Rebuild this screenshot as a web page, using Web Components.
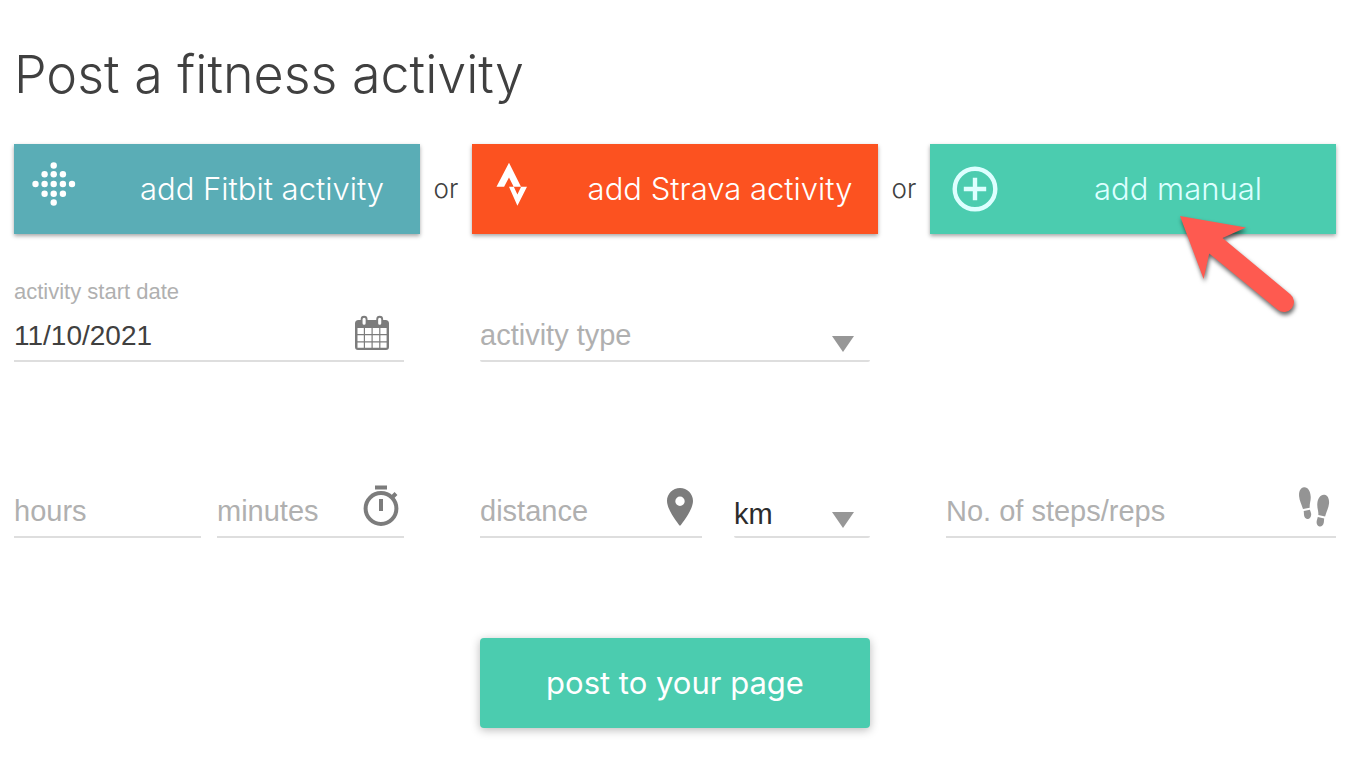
<!DOCTYPE html>
<html lang="en">
<head>
<meta charset="utf-8">
<meta name="viewport" content="width=device-width, initial-scale=1">
<title>Post a fitness activity</title>
<style>
  body {
    margin: 0;
    background: #fff;
    color: #404040;
    font-family: "Liberation Sans", Arial, sans-serif;
    --display-font: Inter, "Open Sans", sans-serif;
    --green: #4bccaf;
  }
</style>
</head>
<body>
<activity-form></activity-form>

<script>
const define = (name, html, setup) => {
  const template = document.createElement("template");
  template.innerHTML = html;

  customElements.define(name, class extends HTMLElement {
    constructor() {
      super();
      this.attachShadow({ mode: "open" });
      this.shadowRoot.appendChild(template.content.cloneNode(true));
    }

    connectedCallback() {
      if (setup) setup(this, this.shadowRoot);
    }
  });
};

define("service-button", /* HTML */ `
  <style>
    :host {
      display: block;
      position: relative;
    }

    button {
      display: flex;
      align-items: center;
      width: 100%;
      height: 90px;
      margin: 0;
      padding: 0;
      border: 0;
      background: var(--button-color, var(--green));
      color: var(--button-text, #fff);
      font: 300 31px/36px var(--display-font);
      box-shadow: 0 2px 4px rgba(0, 0, 0, 0.35);
      cursor: pointer;
    }

    .icon {
      flex: 0 0 90px;
      height: 90px;
    }

    .label {
      flex: 1;
      text-align: center;
      white-space: nowrap;
    }
  </style>
  <button type="button">
    <span class="icon"><slot name="icon"></slot></span>
    <span class="label"><slot></slot></span>
  </button>
  <slot name="pointer"></slot>
`);

define("submit-button", /* HTML */ `
  <style>
    :host {
      display: block;
    }

    button {
      width: 100%;
      height: 90px;
      border: 0;
      border-radius: 4px;
      background: var(--green);
      color: #fff;
      font: 400 31px/36px var(--display-font);
      box-shadow: 0 2px 10px rgba(0, 0, 0, 0.28);
      cursor: pointer;
    }
  </style>
  <button type="submit"><slot></slot></button>
`);

define("text-field", /* HTML */ `
  <style>
    :host {
      display: block;
      min-width: 0;
    }

    label {
      display: block;
      height: 30px;
      font-size: 22px;
      line-height: 28px;
      color: #b0b0b0;
    }

    label:empty {
      display: none;
    }

    .box {
      display: flex;
      height: 52px;
      border-bottom: 2px solid #dedede;
    }

    input {
      flex: 1;
      min-width: 0;
      padding: 2px 0 0;
      border: 0;
      outline: 0;
      background: none;
      color: inherit;
      font: 29px/36px "Liberation Sans", Arial, sans-serif;
    }

    input.filled {
      padding-top: 4px;
      font-size: 28px;
    }

    input::placeholder {
      color: #b0b0b0;
      opacity: 1;
    }
  </style>
  <label for="field"></label>
  <div class="box">
    <input id="field" type="text">
    <slot name="icon"></slot>
  </div>
`, (host, root) => {
  const input = root.querySelector("input");
  const label = host.getAttribute("label");
  const value = host.getAttribute("value");
  const placeholder = host.getAttribute("placeholder");
  if (label) root.querySelector("label").textContent = label;
  if (placeholder) {
    input.placeholder = placeholder;
    input.setAttribute("aria-label", placeholder);
  }
  if (value) {
    input.value = value;
    input.classList.add("filled");
  }
});

define("select-field", /* HTML */ `
  <style>
    :host {
      display: block;
      min-width: 0;
    }

    .box {
      display: grid;
      grid-template-columns: 1fr 38px;
      height: 52px;
      border-bottom: 2px solid #dedede;
      border-radius: 2px;
    }

    select {
      grid-area: 1 / 1 / 2 / 3;
      appearance: none;
      min-width: 0;
      padding: 2px 0 0;
      border: 0;
      outline: 0;
      background: none;
      color: #b0b0b0;
      font: 29px/36px "Liberation Sans", Arial, sans-serif;
    }

    select.filled {
      padding-top: 8px;
      color: #2c2c2c;
    }

    svg {
      grid-area: 1 / 2;
      width: 38px;
      height: 52px;
      pointer-events: none;
    }
  </style>
  <div class="box">
    <select></select>
    <svg viewBox="0 0 38 52" aria-hidden="true"><path d="M0 28h22l-11 16z" fill="#979797"/></svg>
  </div>
`, (host, root) => {
  const select = root.querySelector("select");
  select.setAttribute("aria-label", host.getAttribute("label"));
  host.getAttribute("options").split(",").forEach((name) => select.add(new Option(name)));
  select.classList.toggle("filled", host.hasAttribute("filled"));
});

// Red arrow laid over the button that opens the manual form
define("pointer-arrow", /* HTML */ `
  <style>
    :host {
      position: absolute;
      top: 62px;
      left: calc(50% + 37px);
      pointer-events: none;
    }

    svg {
      display: block;
      filter: drop-shadow(1px 3px 2px rgba(0, 0, 0, 0.6));
    }
  </style>
  <svg width="140" height="120" viewBox="0 0 140 120" aria-hidden="true">
    <path d="M10 10 76 21.5 52.5 32 120.3 88.2A10 10 0 0 1 107.7 103.8L39.2 47.5 33.6 73z" fill="#fe5a50"/>
  </svg>
`);

define("activity-form", /* HTML */ `
  <style>
    :host {
      display: block;
      padding: 42px 12px 34px 14px;
    }

    h1 {
      margin: 0 0 36px;
      font: 300 52px/66px var(--display-font);
    }

    .services {
      display: grid;
      grid-template-columns: 1fr 52px 1fr 52px 1fr;
      align-items: center;
      margin-bottom: 44px;
    }

    .or {
      text-align: center;
      font: 300 26px/36px var(--display-font);
    }

    .fields {
      display: grid;
      grid-template-columns: repeat(3, 1fr);
      column-gap: 76px;
      row-gap: 122px;
      align-items: end;
    }

    .duration {
      display: grid;
      grid-template-columns: 1fr 1fr;
      gap: 16px;
    }

    .distance {
      display: grid;
      grid-template-columns: 1fr 136px;
      gap: 32px;
    }

    .empty {
      grid-column: 3;
    }

    .actions {
      display: grid;
      grid-template-columns: repeat(3, 1fr);
      column-gap: 76px;
      margin-top: 100px;
    }

    .actions submit-button {
      grid-column: 2;
    }

    svg {
      display: block;
    }
  </style>

  <h1>Post a fitness activity</h1>

  <form>
    <div class="services">
      <service-button style="--button-color: #5aadb6">
        <svg slot="icon" width="90" height="90" viewBox="0 0 90 90" fill="#fff" aria-hidden="true">
          <circle cx="39.7" cy="21.5" r="3.2"/>
          <circle cx="30.6" cy="30.3" r="3.2"/><circle cx="39.7" cy="30.3" r="3.2"/><circle cx="48.9" cy="30.3" r="3.2"/>
          <circle cx="21.5" cy="40" r="3.2"/><circle cx="30.6" cy="40" r="3.2"/><circle cx="39.7" cy="40" r="3.2"/><circle cx="48.9" cy="40" r="3.2"/><circle cx="58" cy="40" r="3.2"/>
          <circle cx="30.6" cy="49.7" r="3.2"/><circle cx="39.7" cy="49.7" r="3.2"/><circle cx="48.9" cy="49.7" r="3.2"/>
          <circle cx="39.7" cy="58.5" r="3.2"/>
        </svg>
        add Fitbit activity
      </service-button>
      <span class="or">or</span>
      <service-button style="--button-color: #fc5220">
        <svg slot="icon" width="90" height="90" viewBox="0 0 90 90" fill="#fff" aria-hidden="true">
          <path d="M37 18.7 24.5 42.8h7.600l4.900-9.400 4.700 9.400H49zM37 42.800h4.800l3.600 7.600 3.700-7.600H55L45.400 61.700z"/>
        </svg>
        add Strava activity
      </service-button>
      <span class="or">or</span>
      <service-button style="--button-text: #dff">
        <svg slot="icon" width="90" height="90" viewBox="0 0 90 90" fill="none" stroke="#dff" stroke-width="4.4" aria-hidden="true">
          <circle cx="45" cy="45" r="20.3"/>
          <path d="M45 33.8v22.4M33.8 45h22.4"/>
        </svg>
        add manual
        <pointer-arrow slot="pointer"></pointer-arrow>
      </service-button>
    </div>

    <div class="fields">
      <text-field label="activity start date" value="11/10/2021">
        <svg slot="icon" width="50" height="52" viewBox="0 0 50 52" aria-hidden="true">
          <path d="M4.5 12h27a3.5 3.5 0 0 1 3.5 3.5V39a3 3 0 0 1-3 3H4a3 3 0 0 1-3-3V15.5a3.5 3.5 0 0 1 3.5-3.5z" fill="#7c7c7c"/>
          <path d="M3.500 20h6.300v6H3.500zm7.500 0h6.500v6H11zm7.700 0h6.500v6h-6.500zm7.700 0h6.200v6h-6.200zM3.500 27.200h6.300v6H3.500zm7.500 0h6.500v6H11zm7.700 0h6.500v6h-6.500zm7.700 0h6.200v6h-6.200zM3.500 34.400h6.300v5.400H3.500zm7.500 0h6.500v5.400H11zm7.700 0h6.500v5.400h-6.500zm7.700 0h6.200v5.400h-6.200z" fill="#fff"/>
          <rect x="7.6" y="8.8" width="5" height="9" rx="2.5" fill="#fff" stroke="#7c7c7c" stroke-width="1.9"/>
          <rect x="23.2" y="8.800" width="5" height="9" rx="2.5" fill="#fff" stroke="#7c7c7c" stroke-width="1.9"/>
        </svg>
      </text-field>
      <select-field label="activity type" options="activity type"></select-field>
      <div class="empty"></div>

      <div class="duration">
        <text-field placeholder="hours"></text-field>
        <text-field placeholder="minutes">
          <svg slot="icon" width="50" height="52" viewBox="0 0 50 52" fill="none" stroke="#7c7c7c" stroke-width="4" aria-hidden="true">
            <circle cx="27" cy="24.5" r="15.4"/>
            <path d="M21 3.500h12M27 15v12M38 13.500l4-4"/>
          </svg>
        </text-field>
      </div>
      <div class="distance">
        <text-field placeholder="distance">
          <svg slot="icon" width="50" height="52" viewBox="0 0 50 52" aria-hidden="true">
            <path d="M28 4c-7.200 0-13 5.800-13 13 0 9.500 13 25 13 25s13-15.500 13-25c0-7.200-5.800-13-13-13zm0 18a4.700 4.700 0 1 1 0-9.400 4.700 4.700 0 0 1 0 9.400z" fill="#7c7c7c"/>
          </svg>
        </text-field>
        <select-field label="distance unit" options="km,miles" filled></select-field>
      </div>
      <text-field placeholder="No. of steps/reps">
        <svg slot="icon" width="50" height="52" viewBox="0 0 50 52" fill="#949494" aria-hidden="true">
          <path d="M18 3.200c-3.500.3-5.300 4.200-4.900 9 .3 4.500 2.500 8.200 3.900 12.900l6.700-1.400c-.3-4.300 1.300-6.700 1-11.300C24.300 7 22 2.900 18 3.200zM17.700 27.100l6.200-1.400c.6 1.800 1.400 3.300 1.300 5-.1 2.300-1.300 3.900-3 4.300-2 .4-3.700-1.300-4.100-3.500-.3-1.500-.1-2.700-.4-4.400z"/>
          <path d="M38.500 10.700c3.300.4 5 4.300 4.500 9-.5 4.500-2.600 7.800-3.900 12.800l-6.800-1.400c.4-4.300-1.300-6.700-1-11.300.3-5.300 3.200-9.600 7.200-9.100zM31.800 33l6.400 1.400c-.3 1.700-.1 3-.5 4.500-.6 2.200-2.100 4-4.200 3.600-1.900-.4-3-2.100-2.900-4.500.1-1.700.8-3.200 1.200-5z"/>
        </svg>
      </text-field>
    </div>

    <div class="actions">
      <submit-button>post to your page</submit-button>
    </div>
  </form>
`);
</script>
</body>
</html>
